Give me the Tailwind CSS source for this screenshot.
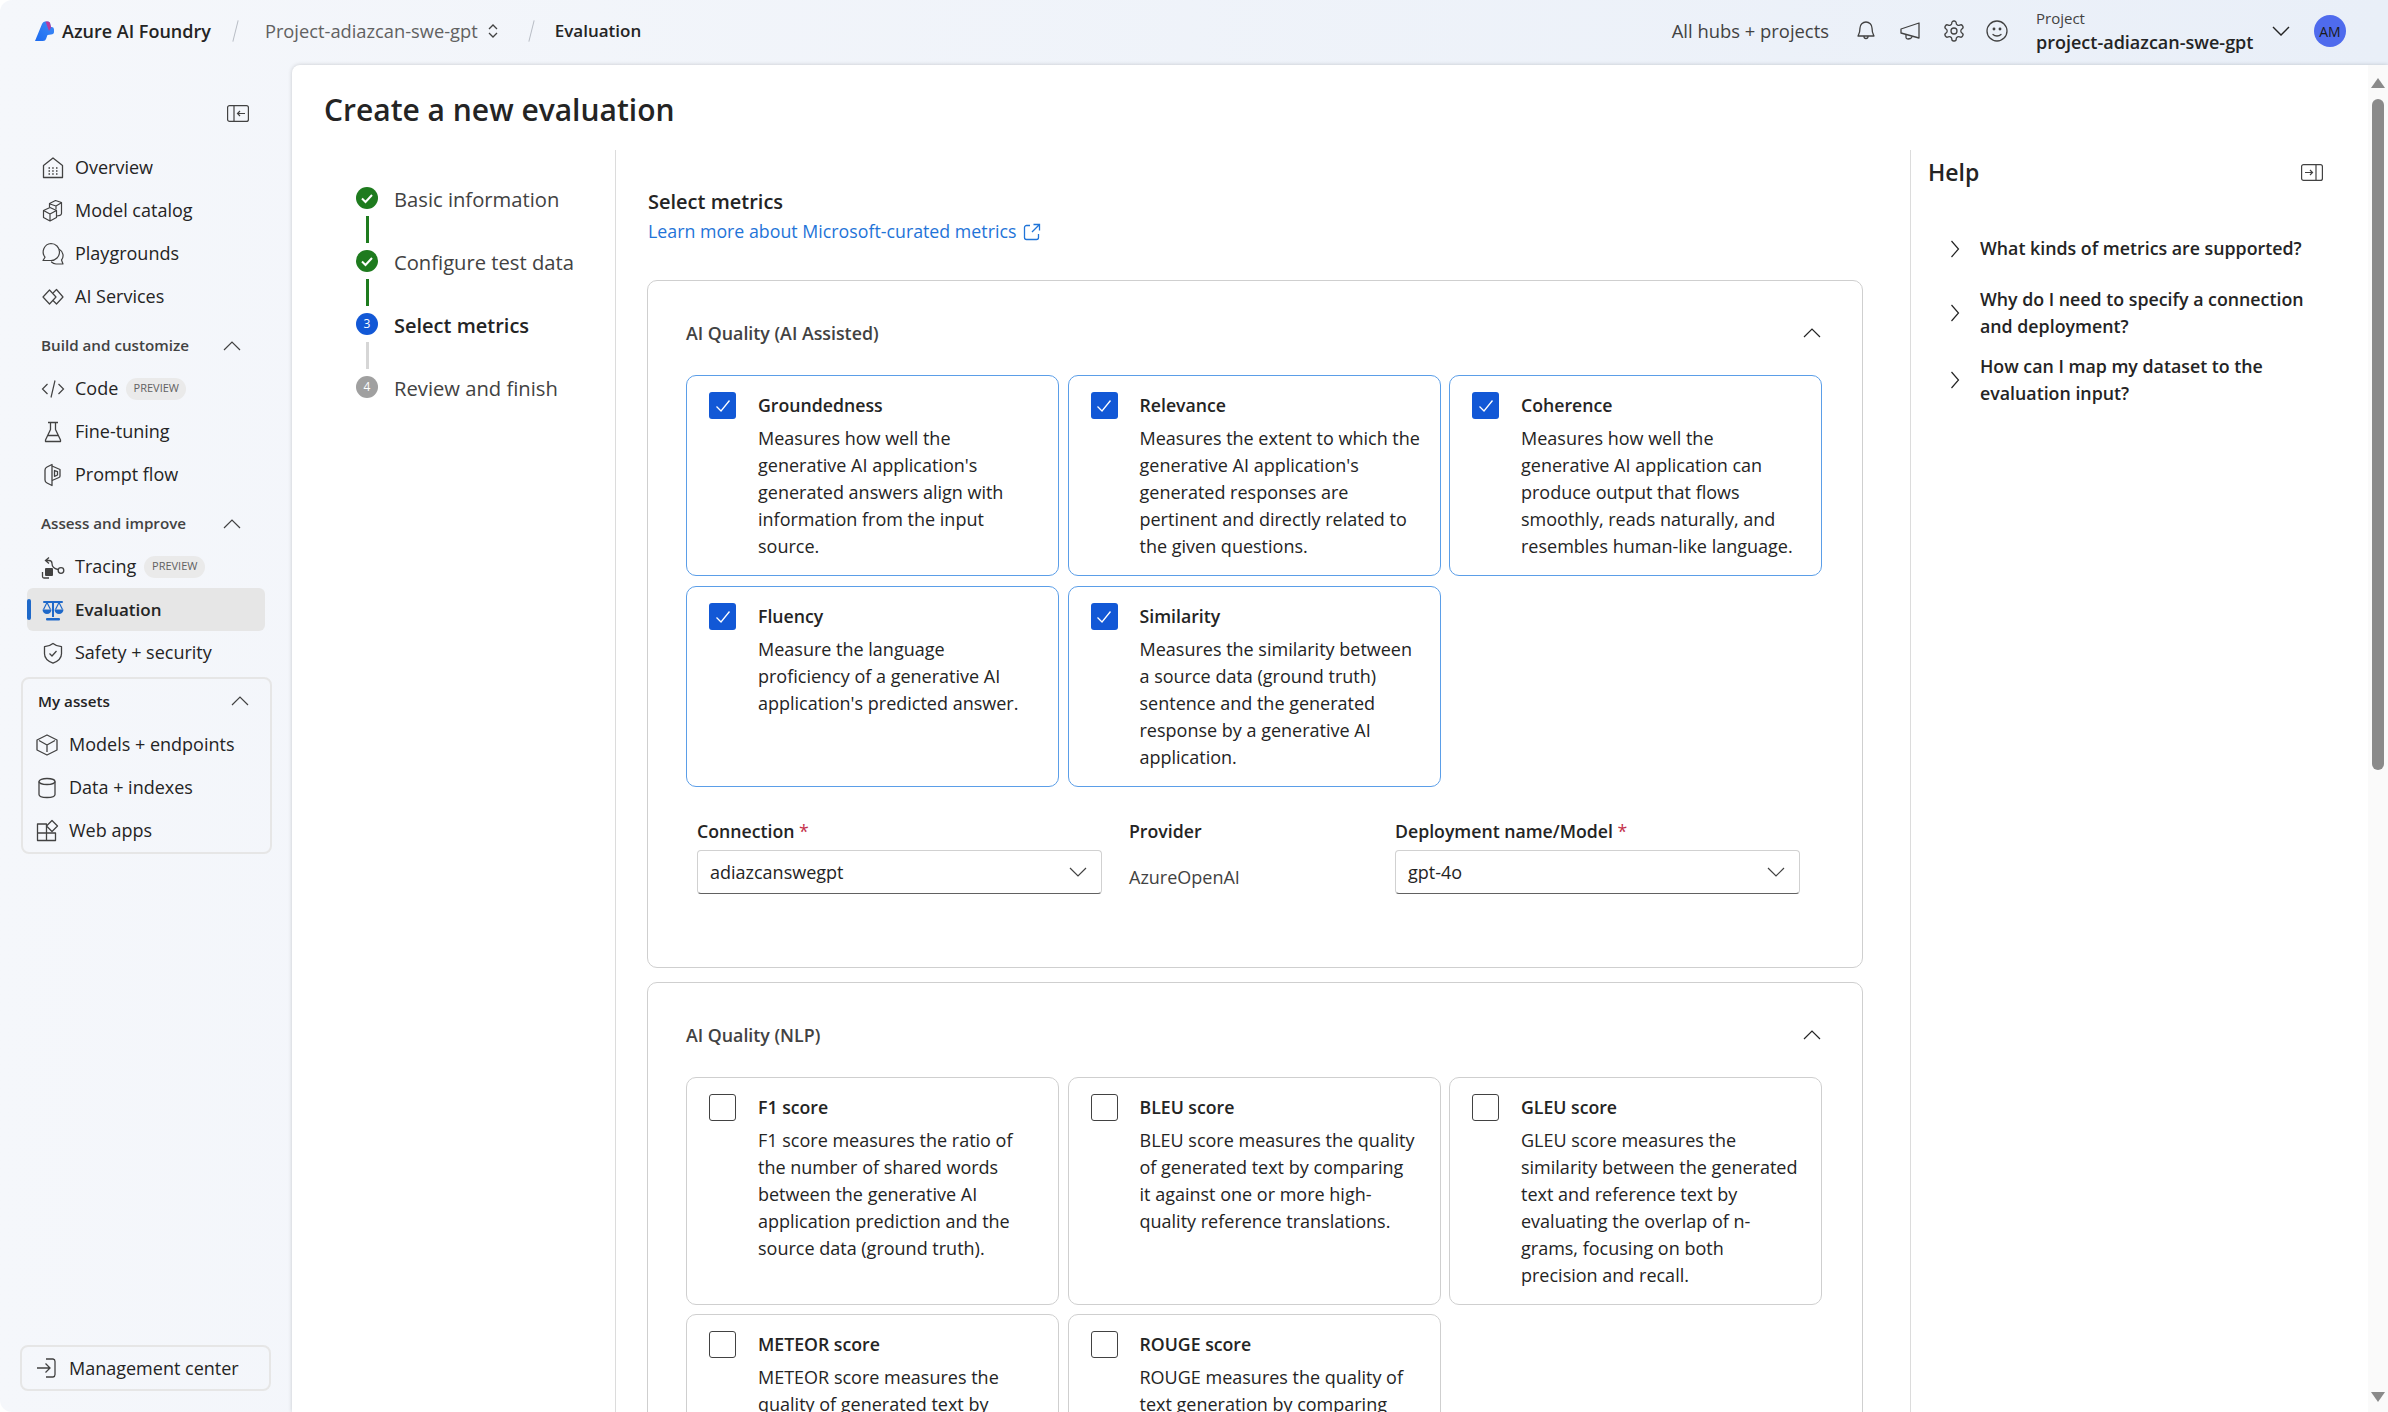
<!DOCTYPE html>
<html lang="en">
<head>
    <meta charset="UTF-8">
    <title>Azure AI Foundry - Evaluation</title>
    <script src="https://cdn.jsdelivr.net/npm/@tailwindcss/browser@4"></script>
</head>
<body class="w-[2388px] h-[1412px] overflow-hidden bg-white font-['Open_Sans',sans-serif] text-[18px] text-[#242424]">
<div class="w-full h-full flex flex-col rounded-l-[12px] overflow-hidden bg-gradient-to-r from-[#f5f7fb] to-[#e9eff8]">

    <!-- top bar -->
    <header class="h-[65px] shrink-0 flex items-center pl-[35px] pr-[42px] pb-[3px]">
        <svg width="20" height="20" viewBox="0 0 20 20" class="mr-[7px] shrink-0">
            <defs>
                <linearGradient id="lg1" x1="0" y1="1" x2="1" y2="0"><stop offset="0" stop-color="#1c6af0"/><stop offset="1" stop-color="#3f8cf7"/></linearGradient>
            </defs>
            <path d="M0 20 L7 3 Q8 .5 10 .5 H13 Q14.500 .5 15 2 L16 6 H17 Q19 6 19 8.500 V11 Q19 13 16 13.500 L12.500 14 L11 18 Q10.500 20 8 20 Z" fill="url(#lg1)"/>
            <path d="M10.500 .5 H13 Q14.500 .5 15 2 L16 6.500 L14 10 Z" fill="#b93a9c"/>
        </svg>
        <span class="font-semibold">Azure AI Foundry</span>
        <span class="ml-[24px] w-px h-[22px] bg-[#b8bcc4] rotate-[14deg]"></span>
        <span class="ml-[29px] text-[18.300px] text-[#616161]">Project-adiazcan-swe-gpt</span>
        <svg width="14" height="18" viewBox="0 0 14 18" fill="none" stroke="#424242" stroke-width="1.300" class="ml-[8px]"><path d="M3 7l4-4 4 4M3 11l4 4 4-4"/></svg>
        <span class="ml-[31px] w-px h-[22px] bg-[#b8bcc4] rotate-[14deg]"></span>
        <span class="ml-[23px] font-semibold text-[17px]">Evaluation</span>

        <div class="ml-auto flex items-center">
            <span class="text-[18.400px] text-[#424242]">All hubs + projects</span>
            <svg width="24" height="24" viewBox="0 0 24 24" fill="none" stroke="#424242" stroke-width="1.300" stroke-linecap="round" stroke-linejoin="round" class="ml-[25px]"><path d="M6 9a6 6 0 0 1 12 0c0 5 1.500 7 2 8H4c.5-1 2-3 2-8"/><path d="M10 17.500a2 2 0 0 0 4 0"/></svg>
            <svg width="24" height="24" viewBox="0 0 24 24" fill="none" stroke="#424242" stroke-width="1.300" stroke-linejoin="round" class="ml-[21px]"><path d="M2 10 L20 4 V19 L2 14 Z"/><path d="M7 15.500 V18.500 Q7 20 9 20 L11.500 19.500 Q13 19 13 17.300"/></svg>
            <svg width="24" height="24" viewBox="0 0 24 24" fill="none" stroke="#424242" stroke-width="1.300" class="ml-[19px]"><path d="M12.220 2h-.44a2 2 0 0 0-2 2v.18a2 2 0 0 1-1 1.730l-.43.25a2 2 0 0 1-2 0l-.15-.08a2 2 0 0 0-2.730.73l-.22.38a2 2 0 0 0 .73 2.730l.15.1a2 2 0 0 1 1 1.720v.51a2 2 0 0 1-1 1.740l-.15.09a2 2 0 0 0-.73 2.730l.22.38a2 2 0 0 0 2.730.73l.15-.08a2 2 0 0 1 2 0l.43.25a2 2 0 0 1 1 1.730V20a2 2 0 0 0 2 2h.44a2 2 0 0 0 2-2v-.18a2 2 0 0 1 1-1.730l.43-.25a2 2 0 0 1 2 0l.15.08a2 2 0 0 0 2.730-.73l.22-.39a2 2 0 0 0-.73-2.730l-.15-.08a2 2 0 0 1-1-1.740v-.5a2 2 0 0 1 1-1.740l.15-.09a2 2 0 0 0 .73-2.730l-.22-.38a2 2 0 0 0-2.730-.73l-.15.08a2 2 0 0 1-2 0l-.43-.25a2 2 0 0 1-1-1.730V4a2 2 0 0 0-2-2z"/><circle cx="12" cy="12" r="3"/></svg>
            <svg width="24" height="24" viewBox="0 0 24 24" fill="none" stroke="#424242" stroke-width="1.300" stroke-linecap="round" class="ml-[19px]"><circle cx="12" cy="12" r="10"/><path d="M8 15.500c2 2 6 2 8 0"/><circle cx="9" cy="10" r=".8" fill="#424242"/><circle cx="15" cy="10" r=".8" fill="#424242"/></svg>
            <div class="ml-[27px] w-[229px] flex flex-col pt-[3px]">
                <span class="text-[15px] leading-[20px] text-[#424242] mt-[-2px]">Project</span>
                <span class="leading-[28px] font-semibold">project-adiazcan-swe-gpt</span>
            </div>
            <svg width="20" height="20" viewBox="0 0 20 20" fill="none" stroke="#242424" stroke-width="1.400" class="ml-[6px]"><path d="M2 6l8 8 8-8"/></svg>
            <div class="ml-[23px] w-[32px] h-[32px] rounded-full bg-[#4f6bed] flex items-center justify-center text-[14px] text-[#1b1b1b]">AM</div>
        </div>
    </header>

    <div class="flex-1 min-h-0 flex">
        <!-- left nav -->
        <aside class="w-[292px] shrink-0 flex flex-col">
            <div class="h-[81px] pt-[40px] pl-[227px] shrink-0">
                <svg width="22" height="17" viewBox="0 0 22 17" fill="none" stroke="#424242" stroke-width="1.200"><rect x=".6" y=".6" width="20.800" height="15.800" rx="2"/><path d="M7 1v15M18 8.500h-7.500M13 6l-2.500 2.500L13 11"/></svg>
            </div>
            <nav class="ml-[27px] w-[238px]">
                <a class="h-[43px] pl-[14px] flex items-center gap-[10px]">
                    <svg width="24" height="24" viewBox="0 0 24 24" fill="none" stroke="#424242" stroke-width="1.300" stroke-linejoin="round" class="shrink-0"><path d="M2.500 21.500V9.500L12 2l9.500 7.500v12z"/><path d="M7.500 12h1.500M11.200 12h1.500M15 12h1.500M7.500 15h1.500M11.200 15h1.500M15 15h1.500M7.500 18h1.500M11.200 18h1.500M15 18h1.500" stroke-width="1.600"/></svg>
                    <span>Overview</span>
                </a>
                <a class="h-[43px] pl-[14px] flex items-center gap-[10px]">
                    <svg width="24" height="24" viewBox="0 0 24 24" fill="none" stroke="#424242" stroke-width="1.200" stroke-linejoin="round" class="shrink-0"><path d="M2.500 11.500l6.500-3 6.500 3v7L9 22l-6.500-3.500zM2.500 11.500L9 15l6.500-3.500M9 15v7"/><path d="M8.500 8V4.500l6-3 6 2v11a2 2 0 0 1-1.500 1.800l-3 .7M9 5l6 2 5-3M15 7v3.500"/></svg>
                    <span>Model catalog</span>
                </a>
                <a class="h-[43px] pl-[14px] flex items-center gap-[10px]">
                    <svg width="24" height="24" viewBox="0 0 24 24" fill="none" stroke="#424242" stroke-width="1.200" stroke-linecap="round" stroke-linejoin="round" class="shrink-0"><path d="M10 1.500a8.500 8.500 0 0 1 0 17H2l2-3.300A8.500 8.500 0 0 1 10 1.500z"/><path d="M18.500 7.500a7 7 0 0 1 2 10.500l1.500 4H15a7 7 0 0 1-4.500-2"/></svg>
                    <span>Playgrounds</span>
                </a>
                <a class="h-[43px] pl-[14px] flex items-center gap-[10px]">
                    <svg width="24" height="24" viewBox="0 0 24 24" fill="none" stroke="#424242" stroke-width="1.200" stroke-linejoin="round" class="shrink-0"><path d="M8.500 5L2 12l6.500 7 6.500-7z"/><path d="M12 8l3.500-3.500L22 12l-6.500 7L12 15.500"/></svg>
                    <span>AI Services</span>
                </a>

                <div class="mt-[6px] h-[43px] pl-[14px] pr-[24px] flex items-center justify-between text-[15.200px] font-semibold text-[#424242]">
                    <span>Build and customize</span>
                    <svg width="18" height="12" viewBox="0 0 18 12" fill="none" stroke="#424242" stroke-width="1.200"><path d="M1 10l8-8 8 8"/></svg>
                </div>
                <a class="h-[43px] pl-[14px] flex items-center gap-[10px]">
                    <svg width="24" height="24" viewBox="0 0 24 24" fill="none" stroke="#424242" stroke-width="1.200" class="shrink-0"><path d="M6.500 7L1.500 12l5 5M17.500 7l5 5-5 5M14 3.500L10 20.500"/></svg>
                    <span>Code</span>
                    <span class="ml-[-2px] h-[22px] w-[60px] rounded-full bg-[#eaeaea] flex items-center justify-center text-[11px] text-[#616161]">PREVIEW</span>
                </a>
                <a class="h-[43px] pl-[14px] flex items-center gap-[10px]">
                    <svg width="24" height="24" viewBox="0 0 24 24" fill="none" stroke="#424242" stroke-width="1.300" stroke-linejoin="round" class="shrink-0"><path d="M7 2.500h10M9.500 2.500v7L4.500 20v1.500h15V20l-5-10.500v-7M7 15.500h10"/></svg>
                    <span>Fine-tuning</span>
                </a>
                <a class="h-[43px] pl-[14px] flex items-center gap-[10px]">
                    <svg width="24" height="24" viewBox="0 0 24 24" fill="none" stroke="#424242" stroke-width="1.300" stroke-linejoin="round" class="shrink-0"><path d="M4 7q0-2 2-3l5-2.500v21L6 20q-2-1-2-3z"/><path d="M11 3l8 3.500v6.500a1.500 1.500 0 0 1-1 1.500l-7 3"/><path d="M13.500 7.500l3 1.200v3.300l-3 1.300z"/></svg>
                    <span>Prompt flow</span>
                </a>

                <div class="mt-[6px] h-[43px] pl-[14px] pr-[24px] flex items-center justify-between text-[15.200px] font-semibold text-[#424242]">
                    <span>Assess and improve</span>
                    <svg width="18" height="12" viewBox="0 0 18 12" fill="none" stroke="#424242" stroke-width="1.200"><path d="M1 10l8-8 8 8"/></svg>
                </div>
                <a class="h-[43px] pl-[14px] flex items-center gap-[10px]">
                    <svg width="24" height="24" viewBox="0 0 24 24" fill="none" stroke="#424242" stroke-width="1.300" class="shrink-0"><path d="M8 2.500L4.500 5.500 8 8.500M5 5.500h3a3 3 0 0 1 3 3c0 3 1 5 6 6"/><circle cx="20" cy="15.500" r="2.800"/><rect x="4" y="13" width="8" height="8" rx="1" fill="#424242" stroke="none"/><path d="M1.500 17v4.500a1.500 1.500 0 0 0 1.500 1.500h5"/></svg>
                    <span>Tracing</span>
                    <span class="ml-[-2px] h-[22px] w-[61px] rounded-full bg-[#eaeaea] flex items-center justify-center text-[11px] text-[#616161]">PREVIEW</span>
                </a>
                <a class="relative h-[43px] pl-[14px] flex items-center gap-[10px] rounded-[6px] bg-[#e6e6e6] font-semibold text-[17px]">
                    <span class="absolute left-0 top-[11px] w-[4px] h-[21px] rounded-[2px] bg-[#1f69c9]"></span>
                    <svg width="24" height="24" viewBox="0 0 24 24" class="shrink-0" fill="#1f69c9"><rect x="2" y="3" width="20" height="2" rx="1"/><rect x="11" y="3" width="2" height="16"/><rect x="5" y="20" width="14" height="2.500" rx="1"/><path d="M1.500 11.500h9a4.500 4.500 0 0 1-9 0zM13.500 11.500h9a4.500 4.500 0 0 1-9 0z"/><path d="M6 4.500l-3.500 7M6 4.500l3.500 7M18 4.500l-3.500 7M18 4.500l3.500 7" fill="none" stroke="#1f69c9" stroke-width="1.200"/></svg>
                    <span>Evaluation</span>
                </a>
                <a class="h-[43px] pl-[14px] flex items-center gap-[10px]">
                    <svg width="24" height="24" viewBox="0 0 24 24" fill="none" stroke="#424242" stroke-width="1.300" stroke-linejoin="round" class="shrink-0"><path d="M12 2.500c3 2.500 5.500 3 8.500 3.200v7c0 4.500-3.500 7.500-8.500 9.500-5-2-8.500-5-8.500-9.500v-7C6.500 5.500 9 5 12 2.500z"/><path d="M8.500 12.500l2.500 2.500 4.500-5"/></svg>
                    <span>Safety + security</span>
                </a>
            </nav>

            <!-- my assets -->
            <div class="mt-[3px] ml-[21px] w-[251px] border-2 border-[#e6e6e6] rounded-[8px]">
                <div class="h-[44px] pl-[15px] pr-[21px] flex items-center justify-between text-[15.200px] font-semibold">
                    <span>My assets</span>
                    <svg width="18" height="12" viewBox="0 0 18 12" fill="none" stroke="#424242" stroke-width="1.200"><path d="M1 10l8-8 8 8"/></svg>
                </div>
                <a class="h-[43px] pl-[12px] flex items-center gap-[10px]">
                    <svg width="24" height="24" viewBox="0 0 24 24" fill="none" stroke="#424242" stroke-width="1.300" stroke-linejoin="round" class="shrink-0"><path d="M12 2l10 5v10l-10 5-10-5V7z"/><path d="M4 7.500l8 4.500 8-4.500M12 12v7"/></svg>
                    <span>Models + endpoints</span>
                </a>
                <a class="h-[43px] pl-[12px] flex items-center gap-[10px]">
                    <svg width="24" height="24" viewBox="0 0 24 24" fill="none" stroke="#424242" stroke-width="1.300" class="shrink-0"><ellipse cx="12" cy="5.500" rx="8" ry="3"/><path d="M4 5.500v13c0 1.800 3.500 3 8 3s8-1.200 8-3v-13"/></svg>
                    <span>Data + indexes</span>
                </a>
                <a class="h-[43px] pl-[12px] flex items-center gap-[10px]">
                    <svg width="24" height="24" viewBox="0 0 24 24" fill="none" stroke="#424242" stroke-width="1.300" stroke-linejoin="round" class="shrink-0"><path d="M2.500 5h9v9h9v7.500h-18zM2.500 14h9v7.500"/><path d="M17 1.500l5.500 5.500L17 12.500 11.500 7z"/></svg>
                    <span>Web apps</span>
                </a>
            </div>

            <div class="mt-auto mb-[21px] ml-[20px] w-[251px] h-[46px] border-2 border-[#e6e6e6] rounded-[8px] pl-[13px] flex items-center gap-[10px]">
                <svg width="24" height="24" viewBox="0 0 24 24" fill="none" stroke="#424242" stroke-width="1.300" class="shrink-0"><path d="M2 12h13M10.500 7.500L15 12l-4.500 4.500M11 3h7a2.500 2.500 0 0 1 2 2.500v13a2.500 2.500 0 0 1-2 2.500h-7"/></svg>
                <span>Management center</span>
            </div>
        </aside>

        <!-- white panel -->
        <main class="flex-1 min-w-0 bg-white rounded-tl-[8px] shadow-[0_0_4px_rgba(0,0,0,0.18)] flex overflow-hidden">
            <div class="flex-1 min-w-0 flex flex-col">
                <h1 class="h-[85px] shrink-0 pl-[32px] pt-[23px] text-[30px] leading-[44px] font-semibold">Create a new evaluation</h1>
                <div class="flex-1 min-h-0 flex">

                    <!-- wizard steps -->
                    <div class="w-[324px] shrink-0 border-r border-[#dcdcdc] pl-[64px] pt-[37px] text-[20.200px] text-[#424242]">
                        <div class="h-[22px] flex items-center gap-[16px]">
                            <svg width="22" height="22" viewBox="0 0 22 22" class="shrink-0"><circle cx="11" cy="11" r="11" fill="#1e7b1e"/><path d="M6 11.500l3.500 3.500L16 8" fill="none" stroke="#fff" stroke-width="2"/></svg>
                            <span class="mt-[3px]">Basic information</span>
                        </div>
                        <div class="ml-[10px] w-[3px] h-[27px] my-[7px] bg-[#1e7b1e]"></div>
                        <div class="h-[22px] flex items-center gap-[16px]">
                            <svg width="22" height="22" viewBox="0 0 22 22" class="shrink-0"><circle cx="11" cy="11" r="11" fill="#1e7b1e"/><path d="M6 11.500l3.500 3.500L16 8" fill="none" stroke="#fff" stroke-width="2"/></svg>
                            <span class="mt-[3px]">Configure test data</span>
                        </div>
                        <div class="ml-[10px] w-[3px] h-[27px] my-[7px] bg-[#1e7b1e]"></div>
                        <div class="h-[22px] flex items-center gap-[16px] font-semibold text-[20px] text-[#242424]">
                            <span class="w-[22px] h-[22px] shrink-0 rounded-full bg-[#1258d6] text-white text-[12px] font-normal flex items-center justify-center">3</span>
                            <span class="mt-[3px]">Select metrics</span>
                        </div>
                        <div class="ml-[10px] w-[3px] h-[27px] my-[7px] bg-[#d6d6d6]"></div>
                        <div class="h-[22px] flex items-center gap-[16px]">
                            <span class="w-[22px] h-[22px] shrink-0 rounded-full bg-[#a0a0a0] text-white text-[12px] flex items-center justify-center">4</span>
                            <span class="mt-[3px]">Review and finish</span>
                        </div>
                    </div>

                    <!-- metrics -->
                    <div class="w-[1295px] shrink-0 pl-[32px] pt-[38px] border-r border-[#dcdcdc]">
                        <h2 class="text-[20px] leading-[27px] font-semibold">Select metrics</h2>
                        <a class="mt-[3px] h-[27px] flex items-center gap-[7px] text-[17.800px] text-[#1f74d8]">
                            <span>Learn more about Microsoft-curated metrics</span>
                            <svg width="18" height="18" viewBox="0 0 18 18" fill="none" stroke="#1f74d8" stroke-width="1.300"><path d="M7 2.500H3.500a2 2 0 0 0-2 2v10a2 2 0 0 0 2 2h10a2 2 0 0 0 2-2V11M10.500 1.500h6v6M16.500 1.500L9 9"/></svg>
                        </a>

                        <section class="mt-[35px] ml-[-1px] w-[1216px] h-[688px] border border-[#cfcfcf] rounded-[10px] pl-[38px] pr-[41px] pt-[37px]">
                            <div class="h-[30px] mb-[27px] flex items-center justify-between font-semibold text-[17.800px] text-[#424242]">
                                <span>AI Quality (AI Assisted)</span>
                                <svg width="18" height="12" viewBox="0 0 18 12" fill="none" stroke="#242424" stroke-width="1.200"><path d="M1 10l8-8 8 8"/></svg>
                            </div>
                            <div class="grid grid-cols-[373px_373px_373px] gap-x-[8.500px] gap-y-[10px]">
                                <div class="border border-[#5b9ee8] rounded-[10px] pl-[22px] pt-[16px] pb-[15px] flex gap-[22px]">
                                    <span class="w-[27px] h-[27px] shrink-0 rounded-[3px] bg-[#1258d6] flex items-center justify-center"><svg width="16" height="14" viewBox="0 0 16 14" fill="none" stroke="#fff" stroke-width="1.300"><path d="M1.500 7.500l4.500 4.500 8.500-10.500"/></svg></span>
                                    <div class="whitespace-nowrap">
                                        <div class="h-[27px] leading-[27px] text-[17.700px] font-semibold mb-[6px]">Groundedness</div>
                                        <p class="leading-[27px]">Measures how well the<br>generative AI application's<br>generated answers align with<br>information from the input<br>source.</p>
                                    </div>
                                </div>
                                <div class="border border-[#5b9ee8] rounded-[10px] pl-[22px] pt-[16px] pb-[15px] flex gap-[22px]">
                                    <span class="w-[27px] h-[27px] shrink-0 rounded-[3px] bg-[#1258d6] flex items-center justify-center"><svg width="16" height="14" viewBox="0 0 16 14" fill="none" stroke="#fff" stroke-width="1.300"><path d="M1.500 7.500l4.500 4.500 8.500-10.500"/></svg></span>
                                    <div class="whitespace-nowrap">
                                        <div class="h-[27px] leading-[27px] text-[17.700px] font-semibold mb-[6px]">Relevance</div>
                                        <p class="leading-[27px]">Measures the extent to which the<br>generative AI application's<br>generated responses are<br>pertinent and directly related to<br>the given questions.</p>
                                    </div>
                                </div>
                                <div class="border border-[#5b9ee8] rounded-[10px] pl-[22px] pt-[16px] pb-[15px] flex gap-[22px]">
                                    <span class="w-[27px] h-[27px] shrink-0 rounded-[3px] bg-[#1258d6] flex items-center justify-center"><svg width="16" height="14" viewBox="0 0 16 14" fill="none" stroke="#fff" stroke-width="1.300"><path d="M1.500 7.500l4.500 4.500 8.500-10.500"/></svg></span>
                                    <div class="whitespace-nowrap">
                                        <div class="h-[27px] leading-[27px] text-[17.700px] font-semibold mb-[6px]">Coherence</div>
                                        <p class="leading-[27px]">Measures how well the<br>generative AI application can<br>produce output that flows<br>smoothly, reads naturally, and<br>resembles human-like language.</p>
                                    </div>
                                </div>
                                <div class="border border-[#5b9ee8] rounded-[10px] pl-[22px] pt-[16px] pb-[15px] flex gap-[22px]">
                                    <span class="w-[27px] h-[27px] shrink-0 rounded-[3px] bg-[#1258d6] flex items-center justify-center"><svg width="16" height="14" viewBox="0 0 16 14" fill="none" stroke="#fff" stroke-width="1.300"><path d="M1.500 7.500l4.500 4.500 8.500-10.500"/></svg></span>
                                    <div class="whitespace-nowrap">
                                        <div class="h-[27px] leading-[27px] text-[17.700px] font-semibold mb-[6px]">Fluency</div>
                                        <p class="leading-[27px]">Measure the language<br>proficiency of a generative AI<br>application's predicted answer.</p>
                                    </div>
                                </div>
                                <div class="border border-[#5b9ee8] rounded-[10px] pl-[22px] pt-[16px] pb-[15px] flex gap-[22px]">
                                    <span class="w-[27px] h-[27px] shrink-0 rounded-[3px] bg-[#1258d6] flex items-center justify-center"><svg width="16" height="14" viewBox="0 0 16 14" fill="none" stroke="#fff" stroke-width="1.300"><path d="M1.500 7.500l4.500 4.500 8.500-10.500"/></svg></span>
                                    <div class="whitespace-nowrap">
                                        <div class="h-[27px] leading-[27px] text-[17.700px] font-semibold mb-[6px]">Similarity</div>
                                        <p class="leading-[27px]">Measures the similarity between<br>a source data (ground truth)<br>sentence and the generated<br>response by a generative AI<br>application.</p>
                                    </div>
                                </div>
                            </div>

                            <!-- connection row -->
                            <div class="mt-[31px] pl-[11px] flex">
                                <div class="w-[405px]">
                                    <label class="block h-[27px] leading-[27px] mb-[5px] text-[17.700px] font-semibold">Connection <span class="text-[#c4314b] font-normal">*</span></label>
                                    <div class="h-[44px] border border-[#d1d1d1] border-b-[#616161] rounded-[4px] pl-[12px] pr-[14px] flex items-center justify-between">
                                        <span>adiazcanswegpt</span>
                                        <svg width="18" height="12" viewBox="0 0 18 12" fill="none" stroke="#424242" stroke-width="1.200"><path d="M1 2l8 8 8-8"/></svg>
                                    </div>
                                </div>
                                <div class="ml-[27px] w-[266px]">
                                    <label class="block h-[27px] leading-[27px] mb-[5px] text-[17.700px] font-semibold">Provider</label>
                                    <div class="mt-[19px] h-[27px] leading-[27px] text-[#424242]">AzureOpenAI</div>
                                </div>
                                <div class="w-[405px]">
                                    <label class="block h-[27px] leading-[27px] mb-[5px] text-[17.700px] font-semibold">Deployment name/Model <span class="text-[#c4314b] font-normal">*</span></label>
                                    <div class="h-[44px] border border-[#d1d1d1] border-b-[#616161] rounded-[4px] pl-[12px] pr-[14px] flex items-center justify-between">
                                        <span>gpt-4o</span>
                                        <svg width="18" height="12" viewBox="0 0 18 12" fill="none" stroke="#424242" stroke-width="1.200"><path d="M1 2l8 8 8-8"/></svg>
                                    </div>
                                </div>
                            </div>
                        </section>

                        <section class="mt-[14px] ml-[-1px] w-[1216px] border border-[#cfcfcf] rounded-[10px] pl-[38px] pr-[41px] pt-[37px] pb-[30px]">
                            <div class="h-[30px] mb-[27px] flex items-center justify-between font-semibold text-[17.800px] text-[#424242]">
                                <span>AI Quality (NLP)</span>
                                <svg width="18" height="12" viewBox="0 0 18 12" fill="none" stroke="#242424" stroke-width="1.200"><path d="M1 10l8-8 8 8"/></svg>
                            </div>
                            <div class="grid grid-cols-[373px_373px_373px] gap-x-[8.500px] gap-y-[9px]">
                                <div class="border border-[#cfcfcf] rounded-[10px] pl-[22px] pt-[16px] pb-[15px] flex gap-[22px]">
                                    <span class="w-[27px] h-[27px] shrink-0 rounded-[3px] border border-[#424242]"></span>
                                    <div class="whitespace-nowrap">
                                        <div class="h-[27px] leading-[27px] text-[17.700px] font-semibold mb-[6px]">F1 score</div>
                                        <p class="leading-[27px]">F1 score measures the ratio of<br>the number of shared words<br>between the generative AI<br>application prediction and the<br>source data (ground truth).</p>
                                    </div>
                                </div>
                                <div class="border border-[#cfcfcf] rounded-[10px] pl-[22px] pt-[16px] pb-[15px] flex gap-[22px]">
                                    <span class="w-[27px] h-[27px] shrink-0 rounded-[3px] border border-[#424242]"></span>
                                    <div class="whitespace-nowrap">
                                        <div class="h-[27px] leading-[27px] text-[17.700px] font-semibold mb-[6px]">BLEU score</div>
                                        <p class="leading-[27px]">BLEU score measures the quality<br>of generated text by comparing<br>it against one or more high-<br>quality reference translations.</p>
                                    </div>
                                </div>
                                <div class="border border-[#cfcfcf] rounded-[10px] pl-[22px] pt-[16px] pb-[15px] flex gap-[22px]">
                                    <span class="w-[27px] h-[27px] shrink-0 rounded-[3px] border border-[#424242]"></span>
                                    <div class="whitespace-nowrap">
                                        <div class="h-[27px] leading-[27px] text-[17.700px] font-semibold mb-[6px]">GLEU score</div>
                                        <p class="leading-[27px]">GLEU score measures the<br>similarity between the generated<br>text and reference text by<br>evaluating the overlap of n-<br>grams, focusing on both<br>precision and recall.</p>
                                    </div>
                                </div>
                                <div class="border border-[#cfcfcf] rounded-[10px] pl-[22px] pt-[16px] pb-[15px] flex gap-[22px]">
                                    <span class="w-[27px] h-[27px] shrink-0 rounded-[3px] border border-[#424242]"></span>
                                    <div class="whitespace-nowrap">
                                        <div class="h-[27px] leading-[27px] text-[17.700px] font-semibold mb-[6px]">METEOR score</div>
                                        <p class="leading-[27px]">METEOR score measures the<br>quality of generated text by</p>
                                    </div>
                                </div>
                                <div class="border border-[#cfcfcf] rounded-[10px] pl-[22px] pt-[16px] pb-[15px] flex gap-[22px]">
                                    <span class="w-[27px] h-[27px] shrink-0 rounded-[3px] border border-[#424242]"></span>
                                    <div class="whitespace-nowrap">
                                        <div class="h-[27px] leading-[27px] text-[17.700px] font-semibold mb-[6px]">ROUGE score</div>
                                        <p class="leading-[27px]">ROUGE measures the quality of<br>text generation by comparing</p>
                                    </div>
                                </div>
                            </div>
                        </section>
                    </div>

                    <!-- help -->
                    <div class="flex-1 min-w-0 pt-[7px] pl-[17px] pr-[43px]">
                        <div class="h-[30px] flex items-center justify-between">
                            <span class="text-[23px] font-semibold">Help</span>
                            <svg width="22" height="17" viewBox="0 0 22 17" fill="none" stroke="#424242" stroke-width="1.200" class="mr-[2px]"><rect x=".6" y=".6" width="20.800" height="15.800" rx="2"/><path d="M15 1v15M4 8.500h7.500M9 6l2.500 2.500L9 11"/></svg>
                        </div>
                        <div class="mt-[48px] flex flex-col font-semibold text-[17.800px] leading-[27px] whitespace-nowrap">
                            <div class="flex items-center gap-[20px] pl-[22px]">
                                <svg width="10" height="18" viewBox="0 0 10 18" fill="none" stroke="#242424" stroke-width="1.200" class="shrink-0"><path d="M1.500 1l7 8-7 8"/></svg>
                                <span>What kinds of metrics are supported?</span>
                            </div>
                            <div class="mt-[24px] flex items-center gap-[20px] pl-[22px]">
                                <svg width="10" height="18" viewBox="0 0 10 18" fill="none" stroke="#242424" stroke-width="1.200" class="shrink-0"><path d="M1.500 1l7 8-7 8"/></svg>
                                <span>Why do I need to specify a connection<br>and deployment?</span>
                            </div>
                            <div class="mt-[13px] flex items-center gap-[20px] pl-[22px]">
                                <svg width="10" height="18" viewBox="0 0 10 18" fill="none" stroke="#242424" stroke-width="1.200" class="shrink-0"><path d="M1.500 1l7 8-7 8"/></svg>
                                <span>How can I map my dataset to the<br>evaluation input?</span>
                            </div>
                        </div>
                    </div>
                </div>
            </div>

            <!-- scrollbar -->
            <div class="w-[20px] shrink-0 bg-[#fafafa] flex flex-col items-center pt-[13px] pb-[10px]">
                <span class="w-0 h-0 border-x-[7px] border-x-transparent border-b-[10px] border-b-[#8a8a8a]"></span>
                <span class="mt-[11px] w-[12px] h-[671px] rounded-full bg-[#8a8a8a]"></span>
                <span class="mt-auto w-0 h-0 border-x-[7px] border-x-transparent border-t-[10px] border-t-[#8a8a8a]"></span>
            </div>
        </main>
    </div>
</div>
</body>
</html>
